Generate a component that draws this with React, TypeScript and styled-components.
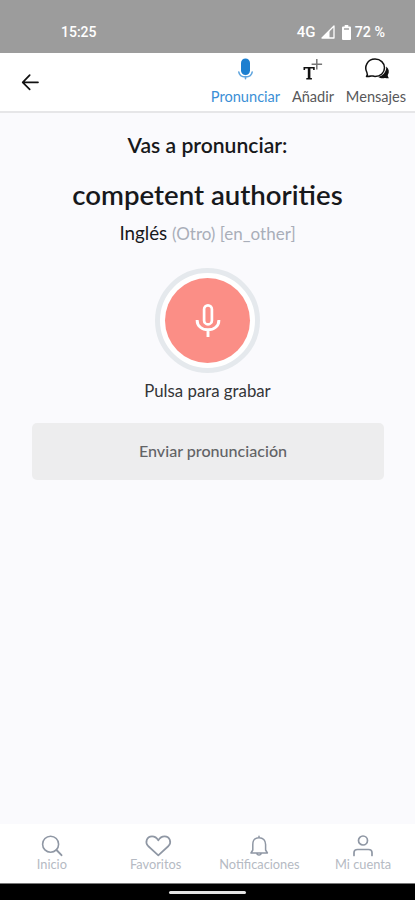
import React from "react";
import styled, { createGlobalStyle } from "styled-components";

const GlobalStyle = createGlobalStyle`
  * { box-sizing: border-box; }
  body { margin: 0; background: #fafafd; font-family: Lato, sans-serif; }
`;

const Screen = styled.div`
  display: flex;
  flex-direction: column;
  width: 415px;
  height: 900px;
  overflow: hidden;
  background: #fafafd;
  color: #17181b;
`;

const StatusBar = styled.div`
  display: flex;
  justify-content: space-between;
  height: 53px;
  flex: none;
  padding: 22px 30px 0 61px;
  background: #9c9c9c;
  color: #fff;
  font: 500 14px/20px Roboto, sans-serif;
`;

const StatusGroup = styled.div`
  display: flex;
  align-items: center;
  height: 20px;
  svg { display: block; flex: none; }
`;

const Network = styled.span`
  width: 24px;
  margin-left: -2px;
  font-size: 15px;
`;

const Charge = styled.span`
  margin-left: 4px;
  font-size: 14.3px;
  white-space: nowrap;
`;

const Header = styled.header`
  display: flex;
  justify-content: space-between;
  height: 60px;
  flex: none;
  padding: 0 8px 0 21px;
  background: #fff;
  border-bottom: 2px solid #e6e6e8;
`;

const BackButton = styled.button`
  width: 20px;
  height: 20px;
  margin-top: 19px;
  padding: 0;
  border: 0;
  background: none;
  svg { display: block; }
`;

const HeaderTabs = styled.nav`
  display: flex;
  gap: 10px;
`;

const HeaderTab = styled.div<{ $active?: boolean; $width: number }>`
  display: flex;
  flex-direction: column;
  align-items: center;
  width: ${(p) => p.$width}px;
  padding-top: 3px;
  color: ${(p) => (p.$active ? "#1c7fd0" : "#101010")};
  svg { display: block; flex: none; }
`;

const TabLabel = styled.span<{ $active?: boolean }>`
  margin-top: 8px;
  color: ${(p) => (p.$active ? "#3b8fd6" : "#58585a")};
  font-size: 14.6px;
  line-height: 18px;
  white-space: nowrap;
`;

const Main = styled.main`
  display: flex;
  flex: 1;
  flex-direction: column;
  align-items: center;
`;

const Prompt = styled.h2`
  margin: 20px 0 0;
  font-size: 21.1px;
  font-weight: 600;
  line-height: 24px;
`;

const Phrase = styled.h1`
  margin: 22px 0 0;
  font-size: 27.6px;
  font-weight: 600;
  line-height: 32px;
  white-space: nowrap;
`;

const Language = styled.p`
  margin: 11px 0 0;
  font-size: 18.8px;
  line-height: 22px;
`;

const Dialect = styled.span`
  color: #a9aeb9;
  font-size: 17px;
`;

const RecordButton = styled.button`
  display: grid;
  place-items: center;
  width: 105px;
  height: 105px;
  margin-top: 23px;
  padding: 0;
  border: 5px solid #e5e9ed;
  border-radius: 50%;
  background: #fff;
`;

const RecordDisc = styled.span`
  display: grid;
  place-items: center;
  width: 85px;
  height: 85px;
  border-radius: 50%;
  background: #fb8e86;
`;

const Hint = styled.p`
  margin: 7px 0 0;
  color: #343538;
  font-size: 16.8px;
  line-height: 22px;
`;

const SendButton = styled.button`
  width: 352px;
  height: 57px;
  margin-top: 21px;
  padding: 0 0 1px 11px;
  border: 0;
  border-radius: 5px;
  background: #ededee;
  color: #626366;
  font: 500 16.1px/22px Lato, sans-serif;
`;

const BottomNav = styled.nav`
  display: grid;
  grid-template-columns: repeat(4, 1fr);
  height: 59px;
  flex: none;
  background: #fff;
`;

const NavItem = styled.div`
  display: flex;
  flex-direction: column;
  align-items: center;
  padding-top: 10px;
  color: #8f97a4;
  svg { display: block; flex: none; }
`;

const NavLabel = styled.span`
  margin-top: -2px;
  color: #b5bac3;
  font-size: 12.8px;
  line-height: 16px;
`;

const SystemBar = styled.div`
  display: flex;
  justify-content: center;
  height: 17px;
  flex: none;
  padding-top: 7px;
  background: #000;
  border-top: 1px solid #777;
`;

const Handle = styled.div`
  width: 77px;
  height: 3px;
  border-radius: 2px;
  background: #e4e4e4;
`;

const line = { fill: "none", stroke: "currentColor", strokeLinecap: "round", strokeLinejoin: "round" } as const;

const SignalIcon = () => (
  <svg width="14" height="14" viewBox="0 0 14 14">
    <path d="M1 13 13 1v12Z" {...line} strokeWidth="1.3" />
    <path d="M1 13 8.5 5.5V13Z" fill="currentColor" />
  </svg>
);

const BatteryIcon = () => (
  <svg width="9" height="15" viewBox="0 0 9 15">
    <path d="M2.7 0h3.6v1.6H8q1 0 1 1V14q0 1-1 1H1q-1 0-1-1V2.6q0-1 1-1h1.7Z" fill="currentColor" />
    <path d="M2 4h5" stroke="#9c9c9c" strokeWidth="1.4" />
  </svg>
);

const BatterySlot = styled.span`
  margin-left: 7px;
`;

const BackIcon = () => (
  <svg width="20" height="20" viewBox="0 0 20 20">
    <path d="M17 10.3H2M8.7 3.2 1.7 10.3l7 7.1" {...line} stroke="#111" strokeWidth="1.7" />
  </svg>
);

const SolidMicIcon = () => (
  <svg width="16" height="24" viewBox="0 0 16 24">
    <rect x="3" y="2.5" width="9" height="16.5" rx="4.5" fill="currentColor" />
    <path d="M.8 16C1.7 22.5 13.3 22.5 14.2 16M7.5 20.5v2.3" {...line} strokeWidth="1.6" strokeOpacity=".7" />
  </svg>
);

const AddTextIcon = () => (
  <svg width="20" height="24" viewBox="0 0 20 24">
    <path d="M1.3 14v-2.3h9.6V14M3.3 22.7h5.6" fill="none" stroke="currentColor" strokeWidth="1.6" />
    <path d="M6.1 11.5v11.3" stroke="currentColor" strokeWidth="2.6" />
    <path d="M13.8 3v10.5M8.6 8.3h10.5" stroke="#777" strokeWidth="1.5" />
  </svg>
);

const ChatIcon = () => (
  <svg width="27" height="24" viewBox="0 0 27 24">
    <path d="M3.5 20.5c1.2-1.5 1.2-2.5.4-4C.8 10.5 4.5 3.1 12 3.1c5.5 0 9.5 3.7 9.5 8.7s-4 8.6-9.500 8.600c-2 0-2.500-.8-4-.4-1.500.4-2.500.6-4.500.5Z" {...line} strokeWidth="1.5" />
    <path d="M23.3 10.5c2.7 2.3 3.3 5.8 1.6 8.3-.5.9.2 2.1 1 3.4-1.9.3-2.9-.4-4.3-.2-2.6.5-4.8-.1-6.3-1.1 5-1.1 8-5 8-10.4Z" fill="currentColor" />
  </svg>
);

const MicIcon = () => (
  <svg width="28" height="36" viewBox="0 0 28 36">
    <rect x="10.1" y="2.3" width="7.8" height="19" rx="3.9" fill="none" stroke="#fff" strokeWidth="2.7" />
    <path d="M3.1 16.9C3.1 23.3 8 26.8 14 26.8s10.9-3.5 10.9-9.9M14 26.8V34" fill="none" stroke="#fff" strokeWidth="2.9" />
  </svg>
);

const SearchIcon = () => (
  <svg width="24" height="24" viewBox="0 0 24 24">
    <circle cx="10.6" cy="10.2" r="8" {...line} strokeWidth="1.6" />
    <path d="m16.5 16 5 5.2" {...line} strokeWidth="1.9" />
  </svg>
);

const HeartIcon = () => (
  <svg width="34" height="24" viewBox="-3 0 34 24">
    <path d="M16.3 21.3 6.1 12C2.6 8.5 4.8 2.5 10 2.4c3 0 5 1.700 6.300 4 1.300-2.300 3.300-4 6.300-4C27.800 2.500 30 8.500 26.500 12Z" {...line} strokeWidth="1.7" />
  </svg>
);

const BellIcon = () => (
  <svg width="20" height="24" viewBox="0 0 20 24">
    <path d="M10 3.7c-4 0-6.2 2.6-6.2 6.9V16l-1.8 3h16.4l-1.800-3v-5.400c0-4.300-2.600-6.900-6.600-6.900ZM10 2.200v1.500M8 20q2 2.200 4 0" {...line} strokeWidth="1.5" />
  </svg>
);

const PersonIcon = () => (
  <svg width="22" height="24" viewBox="0 0 22 24">
    <circle cx="11" cy="6.5" r="4.5" {...line} strokeWidth="1.7" />
    <path d="M2 21.5v-2.7q0-3.3 3.5-3.3h11q3.5 0 3.5 3.3v2.7" {...line} strokeWidth="1.7" />
  </svg>
);

const destinations = [
  { label: "Inicio", Icon: SearchIcon },
  { label: "Favoritos", Icon: HeartIcon },
  { label: "Notificaciones", Icon: BellIcon },
  { label: "Mi cuenta", Icon: PersonIcon },
];

export default function App() {
  return (
    <>
      <GlobalStyle />
      <Screen>
        <StatusBar>
          <span>15:25</span>
          <StatusGroup>
            <Network>4G</Network>
            <SignalIcon />
            <BatterySlot><BatteryIcon /></BatterySlot>
            <Charge>72 %</Charge>
          </StatusGroup>
        </StatusBar>
        <Header>
          <BackButton aria-label="Volver"><BackIcon /></BackButton>
          <HeaderTabs>
            <HeaderTab $active $width={71}><SolidMicIcon /><TabLabel $active>Pronunciar</TabLabel></HeaderTab>
            <HeaderTab $width={44}><AddTextIcon /><TabLabel>Añadir</TabLabel></HeaderTab>
            <HeaderTab $width={62}><ChatIcon /><TabLabel>Mensajes</TabLabel></HeaderTab>
          </HeaderTabs>
        </Header>
        <Main>
          <Prompt>Vas a pronunciar:</Prompt>
          <Phrase>competent authorities</Phrase>
          <Language>Inglés <Dialect>(Otro) [en_other]</Dialect></Language>
          <RecordButton aria-label="Grabar"><RecordDisc><MicIcon /></RecordDisc></RecordButton>
          <Hint>Pulsa para grabar</Hint>
          <SendButton>Enviar pronunciación</SendButton>
        </Main>
        <BottomNav>
          {destinations.map(({ label, Icon }) => (
            <NavItem key={label}><Icon /><NavLabel>{label}</NavLabel></NavItem>
          ))}
        </BottomNav>
        <SystemBar><Handle /></SystemBar>
      </Screen>
    </>
  );
}
